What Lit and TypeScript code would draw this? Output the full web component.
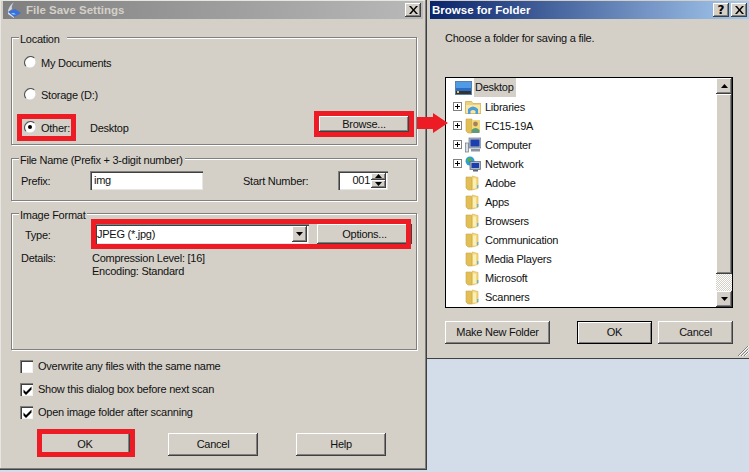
import { LitElement, html, css, svg } from "lit";
import { customElement } from "lit/decorators.js";

const folder = html`<svg class="ico" viewBox="0 0 16 16"><path d="M1 2h5l1 1v12H3l-2-2z" fill="#e2bf55" stroke="#c9a64a" stroke-width=".6"/><path d="M7 1l6 1.500v11L7 15z" fill="#f3d97c" stroke="#d4b158" stroke-width=".6"/><rect x="8" y="3.500" width="3" height="10" fill="#fbeeb6"/><rect x="12" y="10" width="1.400" height="3" fill="#5bb4e8"/></svg>`;
const libraries = html`<svg class="ico" viewBox="0 0 16 16"><path d="M0.500 2.500h6l1.500 2h8v10h-15.500z" fill="#edd27e" stroke="#c9a64a" stroke-width=".7"/><rect x="1" y="6" width="14" height="8" fill="#f8e7a8"/><path d="M3 15V10q5-5 10 0v5h-2.500V12q-2.500-2-5 0v3z" fill="#4d9ed6"/></svg>`;
const userFolder = html`<svg class="ico" viewBox="0 0 16 16"><path d="M1 1h6v14H3l-2-2z" fill="#e2bf55" stroke="#c9a64a" stroke-width=".6"/><rect x="7" y="2" width="8" height="12" fill="#f3d97c"/><circle cx="10.500" cy="6" r="2.400" fill="#a5835a"/><path d="M6.500 15v-3q4-4 8 0v3z" fill="#5d9b79"/></svg>`;
const computer = html`<svg class="ico" viewBox="0 0 16 16"><rect x="0.500" y="6" width="3" height="9" fill="#d9dee4" stroke="#6e7885" stroke-width=".7"/><rect x="4" y="1" width="12" height="10" fill="#aeb8c4" stroke="#6e7885" stroke-width=".7"/><rect x="5.500" y="2.500" width="9" height="7" fill="#1c3fb0"/><rect x="6" y="12" width="9" height="2.500" fill="#8b95a1"/></svg>`;
const network = html`<svg class="ico" viewBox="0 0 16 16"><circle cx="5" cy="5" r="4.500" fill="#2f9ed8"/><path d="M2 3q2-2 4-.5t-1 3-3-2.500zM6 8l2-2 1 2-2 1z" fill="#55b04c"/><rect x="5" y="5.500" width="10.500" height="8" fill="#aeb8c4" stroke="#5b6673" stroke-width=".7"/><rect x="6.500" y="7" width="7.500" height="5" fill="#1c3fb0"/><rect x="8" y="14" width="5" height="1.500" fill="#5b6673"/></svg>`;
const desktop = html`<svg class="desk" viewBox="0 0 17 14"><rect x="0.500" y="0.500" width="16" height="13" fill="#2b6cc4" stroke="#5a7fa8"/><rect x="1" y="1" width="15" height="6" fill="#4f9be6"/><rect x="1" y="10" width="15" height="3" fill="#333"/><rect x="2" y="10" width="2" height="2" fill="#e9c94a"/></svg>`;
const scanner = html`<svg class="scan" viewBox="0 0 16 16"><path d="M8 0Q2 5 2 10l4-3Q5 4 8 0z" fill="#cfd6e6"/><path d="M2 10l7-3 6 4-7 4z" fill="#3a6fe0"/><path d="M2 10l6 5v1l-6-4z" fill="#dfe4f0"/><path d="M5 11h3l2 1.500H7z" fill="#7fd4e8"/></svg>`;
const down = html`<svg class="arr" viewBox="0 0 9 5"><path d="M0 0h9L4.500 5z" fill="#000"/></svg>`;
const up = html`<svg class="arr" viewBox="0 0 9 5"><path d="M0 5h9L4.500 0z" fill="#000"/></svg>`;
const closeX = html`<svg class="glyph" viewBox="0 0 9 8"><path d="M0 0h2l2.500 3L7 0h2L5.500 4 9 8H7L4.500 5 2 8H0l3.500-4z" fill="#000"/></svg>`;

const radio = (on: boolean) => html`<svg class="radio" viewBox="0 0 12 12">
  <circle cx="6" cy="6" r="5.500" fill="#fff"/>
  <path d="M1.800 10.200A6 6 0 0 1 10.200 1.800" fill="none" stroke="#555" stroke-width="1.300"/>
  ${on ? svg`<circle cx="6" cy="6" r="2" fill="#000"/>` : ""}
</svg>`;
const check = (on: boolean) => html`<span class="check">${on
  ? html`<svg viewBox="0 0 9 9"><path d="M0.500 3.500l2.500 2.500L8.500 0.500v3L3 9 0.500 6.500z" fill="#000"/></svg>`
  : ""}</span>`;

const rows = [
  { t: "Libraries", i: libraries, x: true },
  { t: "FC15-19A", i: userFolder, x: true },
  { t: "Computer", i: computer, x: true },
  { t: "Network", i: network, x: true },
  { t: "Adobe", i: folder, x: false },
  { t: "Apps", i: folder, x: false },
  { t: "Browsers", i: folder, x: false },
  { t: "Communication", i: folder, x: false },
  { t: "Media Players", i: folder, x: false },
  { t: "Microsoft", i: folder, x: false },
  { t: "Scanners", i: folder, x: false },
];

@customElement("app-root")
export class AppRoot extends LitElement {
  static styles = css`
    :host { display: block; position: relative; width: 749px; height: 472px; overflow: hidden; background: #d3dce9; font: 11px/13px "Liberation Sans", sans-serif; letter-spacing: -.25px; color: #111; }
    * { box-sizing: border-box; }
    svg { display: block; flex: none; }
    .win { position: absolute; top: 0; background: #d4d0c8; display: flex; flex-direction: column; }
    .left { left: 0; width: 427px; height: 470px; padding: 1px 0 0 0; border-right: 1px solid #404040; border-bottom: 1px solid #404040; box-shadow: inset -1px -1px 0 #808080, inset 1px 1px 0 #e8e6e1; z-index: 1; }
    .right { left: 427px; width: 322px; height: 359px; padding-top: 1px; border-bottom: 1px solid #404040; }
    .title { height: 18px; display: flex; align-items: center; font: bold 11.5px/18px "Liberation Sans", sans-serif; letter-spacing: 0; flex: none; }
    .left .title { margin: 0 3px; padding-left: 3px; background: linear-gradient(90deg, #7f7f7f, #b9b9b9); color: #d4d0c8; }
    .right .title { margin-left: 3px; padding-left: 2px; background: linear-gradient(90deg, #0a246a, #a6caf0); color: #fff; }
    .scan { width: 16px; height: 16px; margin-right: 4px; }
    .tbtn { width: 16px; height: 14px; background: #d4d0c8; display: flex; align-items: center; justify-content: center; box-shadow: inset -1px -1px #404040, inset 1px 1px #fff, inset -2px -2px #808080; color: #000; font: bold 12px/14px "DejaVu Sans", sans-serif; }
    .tbtns { margin-left: auto; display: flex; gap: 2px; margin-right: 2px; }
    .glyph { width: 9px; height: 8px; }
    .body { padding: 0 8px 0 11px; display: flex; flex-direction: column; }
    .group { border: 1px solid #808080; box-shadow: 1px 1px 0 #fff, inset 1px 1px 0 #fff; width: 406px; padding: 0 0 0 9px; display: flex; flex-direction: column; }
    .legend { align-self: flex-start; margin: -5px 0 0 -2px; height: 14px; background: #d4d0c8; padding: 0 2px 0 1px; }
    .loc { margin-top: 18px; height: 108px; padding-left: 12px; padding-right: 7px; }
    .fn { margin-top: 13px; height: 43px; }
    .imgf { margin-top: 12px; height: 137px; }
    .row { display: flex; align-items: center; height: 20px; }
    .row > * { flex: none; }
    .loc .legend { margin-left: -5px; padding-right: 7px; }
    .r1 { margin-top: 5px; }
    .r2 { margin-top: 12px; }
    .r3 { margin-top: 13px; }
    .radio { width: 12px; height: 12px; margin-right: 5px; }
    .t { padding-top: 2px; }
    .other { width: 49px; }
    .btn { display: flex; align-items: center; justify-content: center; background: #d4d0c8; box-shadow: inset -1px -1px #404040, inset 1px 1px #fff, inset -2px -2px #808080; color: #111; }
    .browse { width: 90px; height: 16px; margin: 0 0 6px auto; }
    .lab-prefix { width: 69px; }
    .input { height: 19px; background: #fff; box-shadow: inset 1px 1px #808080, inset 2px 2px #404040, inset -1px -1px #e8e6e1; display: flex; align-items: center; }
    .prefix { width: 113px; padding-left: 4px; }
    .fnrow { margin-top: 2px; }
    .startlab { width: 95px; margin-left: 40px; }
    .spin { width: 50px; justify-content: flex-end; padding-right: 18px; position: relative; }
    .spins { position: absolute; right: 2px; top: 2px; bottom: 2px; width: 15px; display: flex; flex-direction: column; }
    .spins .btn { flex: 1; }
    .arr { width: 7px; height: 4px; }
    .lab-type { width: 74px; padding-left: 4px; }
    .typerow { margin-top: 1px; }
    .select { width: 214px; height: 20px; padding-left: 2px; position: relative; }
    .selbtn { position: absolute; right: 2px; top: 2px; bottom: 2px; width: 15px; }
    .opts { width: 95px; height: 20px; margin-left: 8px; }
    .details { display: flex; margin-top: 8px; }
    .details > div:first-child { width: 71px; }
    .checks { margin: 5px 0 0 9px; display: flex; flex-direction: column; }
    .chk { display: flex; align-items: center; height: 23px; gap: 5px; }
    .check { width: 13px; height: 13px; background: #fff; box-shadow: inset 1px 1px #808080, inset 2px 2px #404040, inset -1px -1px #f4f3f0; display: flex; align-items: center; justify-content: center; padding: 1px 0 0 1px; }
    .check svg { width: 9px; height: 9px; }
    .foot { display: flex; gap: 38px; margin: 9px 0 0 29px; }
    .foot .btn { width: 90px; height: 23px; }
    .choose { margin: 13px 0 0 18px; height: 14px; }
    .tree { margin: 31px 0 0 18px; width: 288px; height: 231px; border: 1px solid #000; background: #fff; display: flex; flex: none; }
    .list { flex: 1; display: flex; flex-direction: column; }
    .trow { height: 19px; display: flex; align-items: center; padding-left: 7px; flex: none; }
    .trow span:last-child { padding-top: 1px; }
    .rootrow { padding-left: 9px; }
    .desk { width: 17px; height: 14px; margin-right: 2px; }
    .sel { background: #d4d0c8; height: 19px; line-height: 19px; padding: 0 2px 0 1px !important; }
    .exp { width: 9px; height: 9px; border: 1px solid #808080; margin-right: 3px; flex: none; padding: 0 !important; background: linear-gradient(#000,#000) center/5px 1px no-repeat, linear-gradient(#000,#000) center/1px 5px no-repeat; }
    .noexp { width: 9px; margin-right: 3px; flex: none; }
    .ico { width: 16px; height: 16px; margin-right: 4px; }
    .bar { width: 16px; display: flex; flex-direction: column; }
    .bar .btn { height: 16px; flex: none; }
    .bar .thumb { height: 180px; }
    .track { height: 17px; flex: none; background: repeating-conic-gradient(#d4d0c8 0 25%, #fff 0 50%) 0 0/2px 2px; }
    .rfoot { display: flex; margin: 13px 0 0 18px; width: 288px; }
    .rfoot .btn { height: 23px; }
    .mnf { width: 105px; }
    .rfoot .ok2 { width: 75px; margin-left: 27px; box-shadow: inset 0 0 0 1px #000, inset 2px 2px #fff, inset -2px -2px #808080; }
    .cancel2 { width: 75px; margin-left: 6px; }
    .grip { position: absolute; right: 0; bottom: 2px; width: 12px; height: 11px; }
    .red { position: absolute; border: 5px solid #ed1c24; z-index: 3; }
    .red-other { left: 17px; top: 114px; width: 59px; height: 27px; }
    .red-browse { left: 314px; top: 111px; width: 100px; height: 26px; }
    .red-format { left: 91px; top: 219px; width: 320px; height: 30px; }
    .red-ok { left: 37px; top: 429px; width: 98px; height: 28px; }
    .red-arrow { position: absolute; left: 417px; top: 113px; width: 32px; height: 20px; z-index: 3; }
  `;

  render() {
    return html`
      <div class="win right">
        <div class="title">Browse for Folder
          <div class="tbtns"><div class="tbtn">?</div><div class="tbtn">${closeX}</div></div>
        </div>
        <div class="choose">Choose a folder for saving a file.</div>
        <div class="tree">
          <div class="list">
            <div class="trow rootrow">${desktop}<span class="sel">Desktop</span></div>
            ${rows.map((r) => html`<div class="trow">
              ${r.x ? html`<span class="exp"></span>` : html`<span class="noexp"></span>`}
              ${r.i}<span>${r.t}</span></div>`)}
          </div>
          <div class="bar">
            <div class="btn">${up}</div>
            <div class="btn thumb"></div>
            <div class="track"></div>
            <div class="btn">${down}</div>
          </div>
        </div>
        <div class="rfoot">
          <div class="btn mnf">Make New Folder</div>
          <div class="btn ok2">OK</div>
          <div class="btn cancel2">Cancel</div>
        </div>
        <svg class="grip" viewBox="0 0 12 11"><path d="M11 1L1 11M11 4L4 11M11 7L7 11" stroke="#808080" fill="none"/><path d="M12 1L2 11M12 4L5 11M12 7L8 11" stroke="#fff" fill="none"/></svg>
      </div>

      <div class="win left">
        <div class="title">${scanner}File Save Settings
          <div class="tbtns"><div class="tbtn">${closeX}</div></div>
        </div>
        <div class="body">
          <div class="group loc">
            <div class="legend">Location</div>
            <div class="row r1">${radio(false)}<span class="t">My Documents</span></div>
            <div class="row r2">${radio(false)}<span class="t">Storage (D:)</span></div>
            <div class="row r3">${radio(true)}<span class="other t">Other:</span><span class="t">Desktop</span>
              <div class="btn browse">Browse...</div>
            </div>
          </div>
          <div class="group fn">
            <div class="legend">File Name (Prefix + 3-digit number)</div>
            <div class="row fnrow">
              <span class="lab-prefix t">Prefix:</span>
              <div class="input prefix">img</div>
              <span class="startlab t">Start Number:</span>
              <div class="input spin">001
                <div class="spins"><div class="btn">${up}</div><div class="btn">${down}</div></div>
              </div>
            </div>
          </div>
          <div class="group imgf">
            <div class="legend">Image Format</div>
            <div class="row typerow">
              <span class="lab-type t">Type:</span>
              <div class="input select">JPEG (*.jpg)<div class="btn selbtn">${down}</div></div>
              <div class="btn opts">Options...</div>
            </div>
            <div class="details">
              <div>Details:</div>
              <div>Compression Level: [16]<br />Encoding: Standard</div>
            </div>
          </div>
          <div class="checks">
            <div class="chk">${check(false)}Overwrite any files with the same name</div>
            <div class="chk">${check(true)}Show this dialog box before next scan</div>
            <div class="chk">${check(true)}Open image folder after scanning</div>
          </div>
          <div class="foot">
            <div class="btn">OK</div>
            <div class="btn">Cancel</div>
            <div class="btn">Help</div>
          </div>
        </div>
      </div>

      <div class="red red-other"></div>
      <div class="red red-browse"></div>
      <div class="red red-format"></div>
      <div class="red red-ok"></div>
      <svg class="red-arrow" viewBox="0 0 32 20"><path d="M0 4h16V0l15 10-15 10v-4H0z" fill="#ed1c24"/></svg>
    `;
  }
}
